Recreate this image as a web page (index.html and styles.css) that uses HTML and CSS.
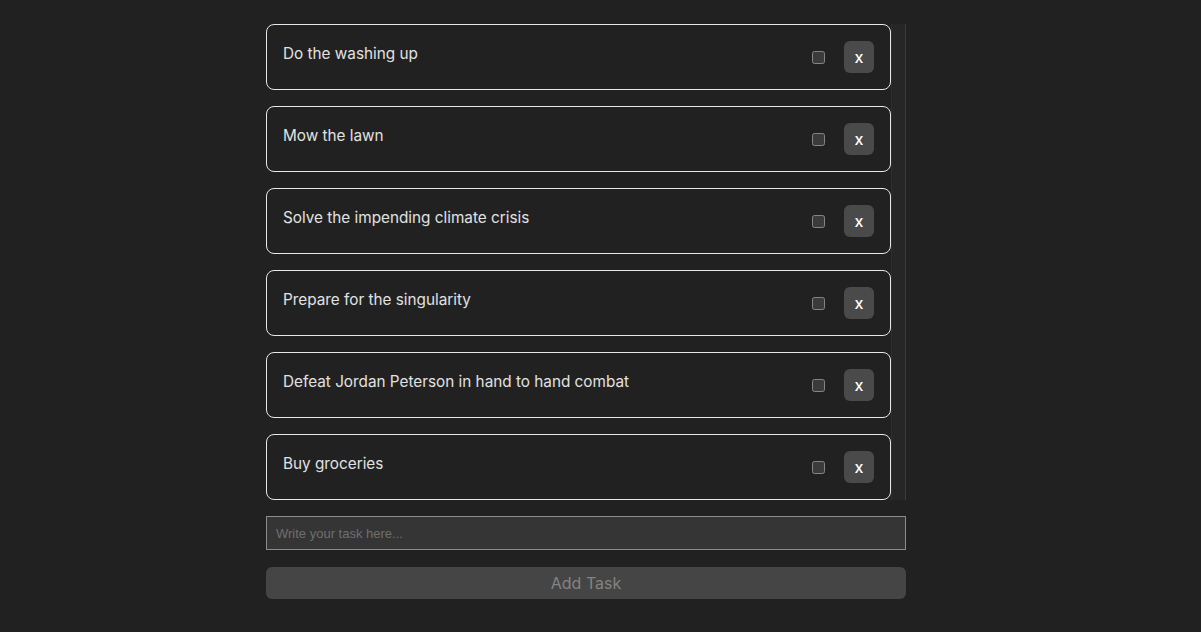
FILE: index.html
```html
<!DOCTYPE html>
<html lang="en">
<head>
<meta charset="utf-8">
<title>Tasks</title>
<link rel="stylesheet" href="styles.css">
</head>
<body>
<main class="app">
  <div class="list-wrap">
    <ul class="task-list">
      <li class="task"><span class="task-text">Do the washing up</span><input class="task-check" type="checkbox"><button class="task-delete">x</button></li>
      <li class="task"><span class="task-text">Mow the lawn</span><input class="task-check" type="checkbox"><button class="task-delete">x</button></li>
      <li class="task"><span class="task-text">Solve the impending climate crisis</span><input class="task-check" type="checkbox"><button class="task-delete">x</button></li>
      <li class="task"><span class="task-text">Prepare for the singularity</span><input class="task-check" type="checkbox"><button class="task-delete">x</button></li>
      <li class="task"><span class="task-text">Defeat Jordan Peterson in hand to hand combat</span><input class="task-check" type="checkbox"><button class="task-delete">x</button></li>
      <li class="task"><span class="task-text">Buy groceries</span><input class="task-check" type="checkbox"><button class="task-delete">x</button></li>
    </ul>
    <div class="scroll-track"></div>
  </div>
  <input class="task-input" type="text" placeholder="Write your task here...">
  <button class="add-btn">Add Task</button>
</main>
</body>
</html>
```
FILE: styles.css
```css
html {
  color-scheme: dark;
}
body {
  margin: 0;
  background: #212121;
  font-family: Inter, "Noto Sans", sans-serif;
  color: #e6e6e6;
}
.app {
  width: 640px;
  margin: 0 auto;
  padding: 24px 29px 0 0;
  display: flex;
  flex-direction: column;
}
.list-wrap {
  display: flex;
  height: 476px;
}
.task-list {
  flex: 1;
  list-style: none;
  margin: 0;
  padding: 0;
  overflow: hidden;
  display: flex;
  flex-direction: column;
  gap: 16px;
}
.scroll-track {
  width: 13px;
  background: #262626;
  border-left: 1px solid #2e2e2e;
  border-right: 1px solid #3a3a3a;
}
.task {
  flex: none;
  box-sizing: border-box;
  height: 66px;
  border: 1px solid #e8e8e8;
  border-radius: 8px;
  padding: 16px;
  display: flex;
  align-items: center;
}
.task-text {
  flex: 1;
  align-self: flex-start;
  font-size: 15.3px;
  line-height: 24px;
  margin-top: 1px;
  color: #e2e2e2;
}
.task-check {
  width: 13px;
  height: 13px;
  margin: 0 19px 0 0;
}
.task-delete {
  width: 30px;
  height: 32px;
  border: none;
  border-radius: 6px;
  background: #4a4a4a;
  color: #ffffff;
  font-family: Inter, "Noto Sans", sans-serif;
  font-size: 16px;
  font-weight: 500;
  padding: 0;
}
.task-input {
  margin-top: 16px;
  height: 34px;
  box-sizing: border-box;
  background: #353535;
  border: 1px solid #8c8c8c;
  border-radius: 0;
  padding: 0 9px;
  font-family: "Liberation Sans", Arial, sans-serif;
  font-size: 13px;
  color: #e0e0e0;
  outline: none;
}
.task-input::placeholder {
  color: #6f6f6f;
}
.add-btn {
  margin-top: 17px;
  height: 32px;
  border: none;
  border-radius: 6px;
  background: #454545;
  color: #838383;
  font-family: Inter, "Noto Sans", sans-serif;
  font-size: 16px;
}
```
